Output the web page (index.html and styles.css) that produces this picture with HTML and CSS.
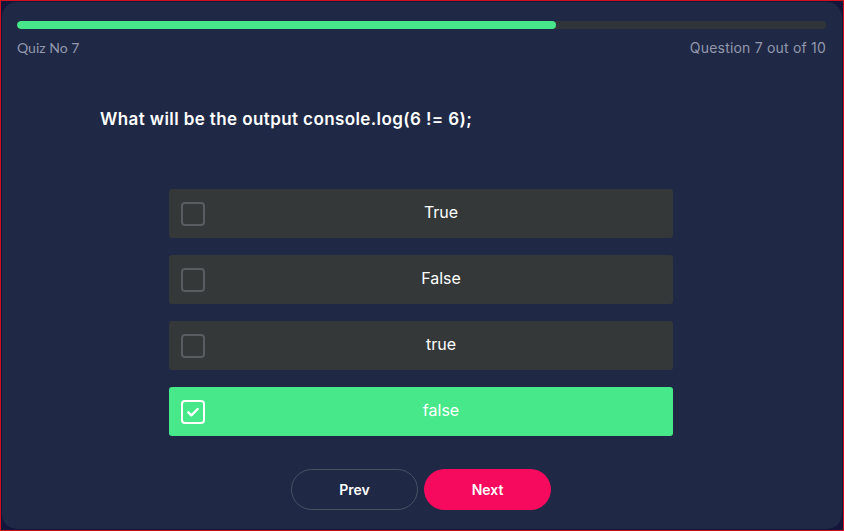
FILE: index.html
```html
<!DOCTYPE html>
<html lang="en">
<head>
<meta charset="utf-8">
<title>Quiz</title>
<link rel="stylesheet" href="styles.css">
</head>
<body>
<div class="frame">
  <div class="card">
    <div class="progress"><div class="progress-fill" style="width: 66.6%"></div></div>
    <div class="meta">
      <span class="quiz-no">Quiz No 7</span>
      <span class="count">Question 7 out of 10</span>
    </div>
    <h1 class="question">What will be the output console.log(6 != 6);</h1>
    <div class="options">
      <div class="option"><span class="box"></span><span class="label">True</span></div>
      <div class="option"><span class="box"></span><span class="label">False</span></div>
      <div class="option"><span class="box"></span><span class="label">true</span></div>
      <div class="option selected"><span class="box"><svg viewBox="0 0 24 24" width="16" height="16"><path d="M5 12.5l4.5 4.5L19 7.5" fill="none" stroke="#fff" stroke-width="3.5" stroke-linecap="round" stroke-linejoin="round"/></svg></span><span class="label">false</span></div>
    </div>
    <div class="actions">
      <button class="btn prev">Prev</button>
      <button class="btn next">Next</button>
    </div>
  </div>
</div>
</body>
</html>
```
FILE: styles.css
```css
* { box-sizing: border-box; }
html, body { margin: 0; padding: 0; }
body {
  width: 844px;
  height: 531px;
  background: #13163a;
  font-family: "Inter", "Open Sans", sans-serif;
  overflow: hidden;
}
.frame {
  width: 844px;
  height: 531px;
  border: 1px solid #d0101a;
  padding: 1px;
}
.card {
  width: 100%;
  height: 100%;
  background: #1f2946;
  border-radius: 15px;
  padding: 19px 16px 0 15px;
  display: flex;
  flex-direction: column;
}
.progress {
  height: 8px;
  background: #2f3538;
  border-radius: 4px;
  overflow: hidden;
}
.progress-fill {
  height: 100%;
  background: #47e68a;
  border-radius: 4px;
}
.meta {
  display: flex;
  justify-content: space-between;
  margin-top: 10px;
  color: #9398ad;
  font-size: 14px;
  line-height: 18px;
}
.quiz-no { font-family: "Lato", sans-serif; }
.count { letter-spacing: 0.2px; }
.question {
  margin: 51px 0 0 83px;
  color: #fff;
  font-size: 17px;
  font-weight: 600;
  line-height: 22px;
  letter-spacing: 0.4px;
}
.options {
  margin: 59px 0 0 152px;
  width: 504px;
  display: flex;
  flex-direction: column;
  gap: 17px;
}
.option {
  height: 49px;
  background: #343839;
  border-radius: 3px;
  display: flex;
  align-items: center;
  padding-left: 12px;
}
.box {
  width: 24px;
  height: 24px;
  border: 2px solid #595c60;
  border-radius: 4px;
  display: flex;
  align-items: center;
  justify-content: center;
  flex: none;
}
.label {
  flex: 1;
  text-align: center;
  color: #fff;
  font-size: 16px;
  margin-left: 4px;
  margin-top: -3px;
}
.option.selected { background: #46e88a; }
.option.selected .box { border-color: #fff; }
.actions {
  display: flex;
  gap: 6px;
  margin-top: 33px;
  padding-left: 274px;
}
.btn {
  width: 127px;
  height: 41px;
  border-radius: 21px;
  font-family: "Inter", sans-serif;
  font-size: 14px;
  font-weight: 600;
  color: #fff;
  cursor: pointer;
}
.prev {
  background: transparent;
  border: 1px solid #4a5163;
}
.next {
  background: #f50a5e;
  border: none;
}
```
